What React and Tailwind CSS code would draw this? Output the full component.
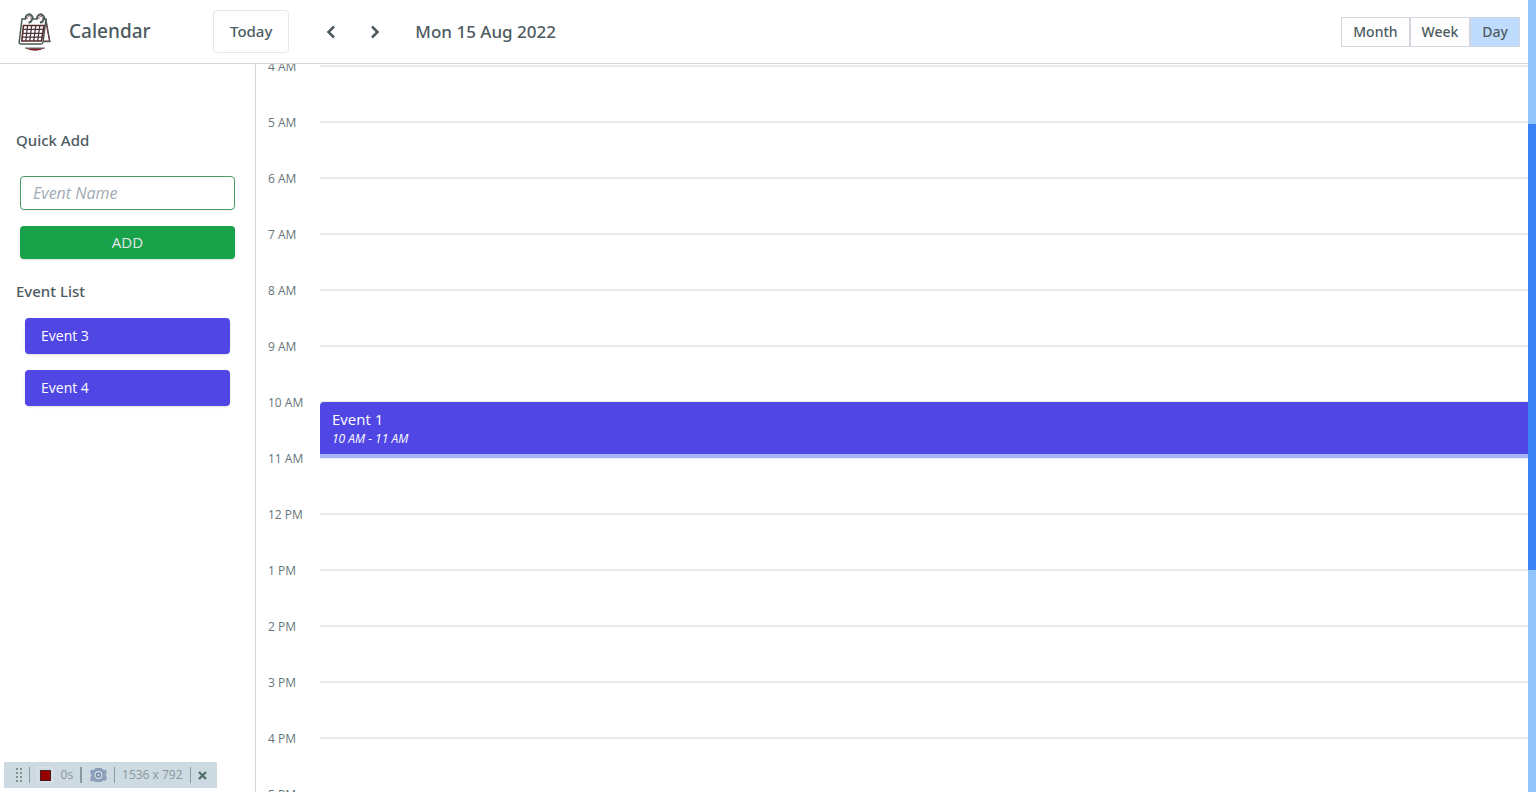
import { useState } from "react";

const HOURS = [
  "4 AM", "5 AM", "6 AM", "7 AM", "8 AM", "9 AM", "10 AM",
  "11 AM", "12 PM", "1 PM", "2 PM", "3 PM", "4 PM", "5 PM",
];
const EVENTS = { "10 AM": { title: "Event 1", time: "10 AM - 11 AM" } };
const UNSCHEDULED = ["Event 3", "Event 4"];

function Logo() {
  return (
    <svg viewBox="0 0 34 38" className="h-[38px] w-[34px]" fill="none" aria-hidden="true">
      <path d="M27.500 6.500 31.500 28H25.500" stroke="#7f1d1d" strokeWidth="1.200" />
      <path d="M28 6 32 28.600H25.500" stroke="#4b5a56" strokeWidth="1.100" />
      <path d="M4 6h24L25 29.500Q24.800 31 23 31H2.800Q1 31 1.200 29Z" fill="#fff" stroke="#4b5a56" strokeWidth="1.500" />
      <path d="M5.500 12.500h20.500L23.500 28H3.800Z" stroke="#5b2a2c" strokeWidth="1.600" />
      <path d="M5.300 16.400h19.900M4.900 20.300h19.700M4.400 24.200h19.500M9.600 12.500 7.800 28M13.700 12.500 11.700 28M17.800 12.500 15.700 28M21.900 12.500 19.600 28" stroke="#4a3438" strokeWidth="1.300" />
      <path d="M8 4h6v5H8zM19.500 4h6v5h-6z" fill="#fff" />
      <path d="M8 6.200A3.400 3.400 0 1 1 13.800 7Q13 9.800 10.500 9.300M19.500 6.200A3.400 3.400 0 1 1 25.300 7Q24.500 9.800 22 9.300" stroke="#4b5a56" strokeWidth="2" />
      <path d="M9.700 6a1.800 1.800 0 1 1 2.700.500M21.200 6a1.800 1.800 0 1 1 2.700.500" stroke="#9a6b6b" strokeWidth=".9" />
      <path d="M7 35.300h20Q17 40 7 35.300Z" fill="#7a1c22" />
      <path d="M7 35h20" stroke="#4b5a56" strokeWidth=".9" />
    </svg>
  );
}

function Header({ view, setView }) {
  const base = "h-[30px] border border-gray-300 px-[11px] text-sm font-medium";
  return (
    <header className="flex h-16 shrink-0 items-center border-b border-gray-300 pr-2 pl-[18px] font-['Noto_Sans',sans-serif]">
      <div className="flex w-[195px] items-center gap-[17px]">
        <Logo />
        <h1 className="text-[19px] font-medium">Calendar</h1>
      </div>
      <button className="h-[43px] rounded border border-gray-200 px-4 text-[15px] font-medium">Today</button>
      <div className="ml-[34px] flex items-center gap-7">
        <button aria-label="Previous day" className="flex h-6 w-4 items-center justify-center">
          <svg viewBox="0 0 16 16" className="size-4" fill="none" stroke="currentColor" strokeWidth="2.500">
            <path d="M11 2.500 5.500 8l5.500 5.500" />
          </svg>
        </button>
        <button aria-label="Next day" className="flex h-6 w-4 items-center justify-center">
          <svg viewBox="0 0 16 16" className="size-4" fill="none" stroke="currentColor" strokeWidth="2.500">
            <path d="M5 2.500 10.500 8 5 13.500" />
          </svg>
        </button>
      </div>
      <h2 className="ml-8 text-[17px] font-medium">Mon 15 Aug 2022</h2>
      <div className="ml-auto flex">
        {["Month", "Week", "Day"].map((v) => (
          <button
            key={v}
            onClick={() => setView(v)}
            aria-pressed={view === v}
            className={view === v ? `${base} border-blue-300 bg-[#bfdbfe]` : base}
          >
            {v}
          </button>
        ))}
      </div>
    </header>
  );
}

function Sidebar() {
  const heading = "text-[15px] leading-6 font-medium font-['Noto_Sans',sans-serif]";
  return (
    <aside className="w-64 shrink-0 border-r border-gray-300 px-4 pt-16">
      <h2 className={heading}>Quick Add</h2>
      <form className="mt-6 flex flex-col gap-4 px-1" onSubmit={(e) => e.preventDefault()}>
        <input
          aria-label="Event Name"
          placeholder="Event Name"
          className="h-[34px] rounded border border-[#4a9a6a] px-3 text-base shadow-xs placeholder:text-[#a0abb5] placeholder:italic"
        />
        <button className="h-[33px] rounded bg-[#18a34a] text-[15px] text-gray-200 shadow-sm">ADD</button>
      </form>
      <h2 className={`mt-5 ${heading}`}>Event List</h2>
      <ul className="mt-[15px] flex flex-col gap-4 px-[9px]">
        {UNSCHEDULED.map((e) => (
          <li key={e} className="flex h-9 items-center rounded bg-[#5046e4] px-4 text-sm text-white shadow-sm">
            {e}
          </li>
        ))}
      </ul>
    </aside>
  );
}

function DayGrid() {
  return (
    <main className="min-w-0 flex-1 overflow-hidden pt-px">
      {HOURS.map((h) => (
        <div key={h} className="flex h-14">
          <div className="-mt-2 w-16 shrink-0 pl-3 text-xs leading-5 text-[#66757a]">{h}</div>
          <div className={`flex-1 border-t-2 border-[#ebebeb] ${EVENTS[h] ? "relative z-10" : ""}`}>
            {EVENTS[h] && (
              <article className="absolute inset-x-0 -top-px h-14 rounded-tl border-b-4 border-[#a5b4fc] bg-[#5046e4] px-3 pt-[7px] text-white">
                <h3 className="text-[15px] leading-5">{EVENTS[h].title}</h3>
                <p className="text-xs leading-5 italic">{EVENTS[h].time}</p>
              </article>
            )}
          </div>
        </div>
      ))}
    </main>
  );
}

function RecorderBar() {
  const line = "h-4 w-px bg-[#8a9a9c]";
  return (
    <div className="absolute bottom-1 left-1 flex h-[26px] w-[213px] items-center justify-between bg-[#cedae1] pr-[10px] pl-3 text-xs text-[#87979a]">
      <svg viewBox="0 0 6 14" className="h-3.5 w-1.5" fill="#82938f" aria-hidden="true">
        {[0, 4, 8, 12].map((y) => (
          <path key={y} d={`M0 ${y}h2v2h-2zM4 ${y}h2v2h-2z`} />
        ))}
      </svg>
      <span className={line} />
      <button aria-label="Stop" className="flex size-4 items-center justify-center border border-[#dde3e4]">
        <span className="size-[11px] border border-[#4b2020] bg-[#960000]" />
      </button>
      <span>0s</span>
      <span className="h-4 w-0.5 bg-[#8a9a9c]" />
      <button aria-label="Take snapshot">
        <svg viewBox="0 0 17 14" className="h-3.5 w-[17px]" aria-hidden="true">
          <path d="M1 2.500h3l1.500-2h6l1.500 2h3v3l-1 1.500 1 2v3H13l-1.500 1.500h-6L4 12.500H1v-3l1-2-1-2z" fill="#8fa2bd" stroke="#8598b4" />
          <circle cx="8.500" cy="7" r="4.600" fill="#d4dee8" stroke="#8094b0" />
          <circle cx="8.500" cy="7" r="2" fill="#c3d0dd" stroke="#7288a5" strokeWidth="1.400" />
        </svg>
      </button>
      <span className={line} />
      <span>1536 x 792</span>
      <span className={line} />
      <button aria-label="Close">
        <svg viewBox="0 0 9 9" className="size-[9px]" stroke="#50706a" strokeWidth="2.400" aria-hidden="true">
          <path d="m1 1 7 7M8 1 1 8" />
        </svg>
      </button>
    </div>
  );
}

export default function App() {
  const [view, setView] = useState("Day");
  return (
    <div className="relative flex h-screen overflow-hidden bg-white font-['Open_Sans',sans-serif] text-[#4d5b61]">
      <div className="flex min-w-0 flex-1 flex-col">
        <Header view={view} setView={setView} />
        <div className="flex min-h-0 flex-1">
          <Sidebar />
          <DayGrid />
        </div>
      </div>
      <div className="flex w-2 shrink-0 flex-col bg-[#93c5fd]" aria-hidden="true">
        <div className="mt-31 h-[446px] bg-[#3b82f6]" />
      </div>
      <RecorderBar />
    </div>
  );
}
